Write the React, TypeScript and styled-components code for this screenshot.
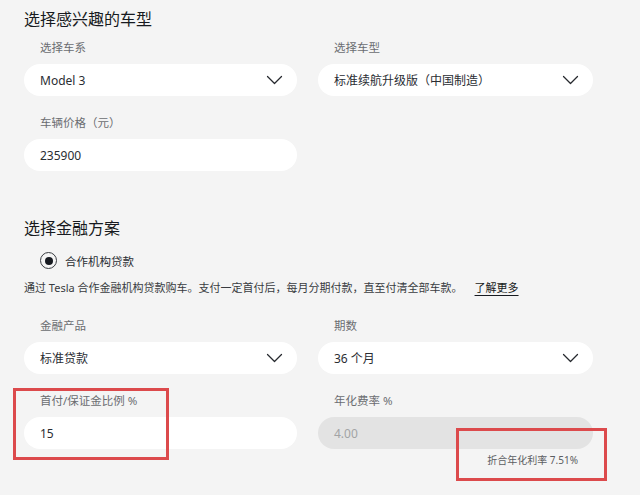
import styled, { createGlobalStyle } from 'styled-components'

const GlobalStyle = createGlobalStyle`
    html, body {
        margin: 0;
        padding: 0;
        background: #f4f4f4;
    }
    body {
        font-family: "Noto Sans", "Noto Sans CJK SC", sans-serif;
        color: #171a20;
    }
`

const Page = styled.div`
    position: relative;
    width: 640px;
    height: 495px;
    overflow: hidden;
    padding: 8px 0 0 24px;
    box-sizing: border-box;
`

const Title = styled.h2<{ $top?: number }>`
    margin: ${p => p.$top ?? 0}px 0 0;
    font-size: 16px;
    line-height: 22px;
    font-weight: 400;
    color: #171a20;
`

const Grid = styled.div<{ $top: number }>`
    display: grid;
    grid-template-columns: 273px 275px;
    column-gap: 21px;
    row-gap: 20px;
    margin-top: ${p => p.$top}px;
`

const Field = styled.div`
    display: flex;
    flex-direction: column;
`

const Label = styled.label`
    padding-left: 16px;
    font-size: 11.5px;
    line-height: 14px;
    color: #6b6d71;
    margin-bottom: 9px;
`

const Box = styled.div<{ $disabled?: boolean }>`
    display: flex;
    align-items: center;
    justify-content: space-between;
    height: 32px;
    border-radius: 16px;
    padding: 0 14px 0 16px;
    background: ${p => (p.$disabled ? '#e3e3e3' : '#ffffff')};
    color: ${p => (p.$disabled ? '#a2a3a5' : '#2a2d33')};
    font-size: 12px;
`

const Note = styled.div`
    grid-column: 2;
    margin-top: -16px;
    padding-right: 15px;
    text-align: right;
    font-size: 10px;
    line-height: 14px;
    color: #5c5e62;
`

const RadioRow = styled.div`
    display: flex;
    align-items: center;
    gap: 8px;
    margin: 13px 0 0 16px;
    font-size: 11.5px;
    color: #2a2d33;
`

const RadioDot = styled.span`
    width: 15px;
    height: 15px;
    border: 1.5px solid #393c41;
    border-radius: 50%;
    display: flex;
    align-items: center;
    justify-content: center;
    &::after {
        content: '';
        width: 8px;
        height: 8px;
        border-radius: 50%;
        background: #171a20;
    }
`

const Desc = styled.p`
    margin: 10px 0 0;
    font-size: 11px;
    line-height: 18px;
    color: #393c41;
    a {
        color: #171a20;
        text-decoration: underline;
        text-underline-offset: 3px;
        margin-left: 12px;
    }
`

const Mark = styled.div<{ $x: number; $y: number; $w: number; $h: number }>`
    position: absolute;
    left: ${p => p.$x}px;
    top: ${p => p.$y}px;
    width: ${p => p.$w}px;
    height: ${p => p.$h}px;
    border: 3px solid #dc4a4c;
    box-sizing: border-box;
    pointer-events: none;
`

const Chevron = () => (
    <svg width="17" height="10" viewBox="0 0 17 10" fill="none">
        <path d="M1.5 1.5 L8.5 8.5 L15.5 1.5" stroke="#26292e" strokeWidth="1.25" strokeLinecap="round" strokeLinejoin="round" />
    </svg>
)

const Select = ({ value }: { value: string }) => (
    <Box>
        <span>{value}</span>
        <Chevron />
    </Box>
)

export default function App() {
    return (
        <Page>
            <GlobalStyle />
            <Title>选择感兴趣的车型</Title>
            <Grid $top={11}>
                <Field>
                    <Label>选择车系</Label>
                    <Select value="Model 3" />
                </Field>
                <Field>
                    <Label>选择车型</Label>
                    <Select value="标准续航升级版（中国制造）" />
                </Field>
                <Field>
                    <Label>车辆价格（元）</Label>
                    <Box>235900</Box>
                </Field>
            </Grid>

            <Title $top={46}>选择金融方案</Title>
            <RadioRow>
                <RadioDot />
                合作机构贷款
            </RadioRow>
            <Desc>
                通过 Tesla 合作金融机构贷款购车。支付一定首付后，每月分期付款，直至付清全部车款。<a>了解更多</a>
            </Desc>
            <Grid $top={22}>
                <Field>
                    <Label>金融产品</Label>
                    <Select value="标准贷款" />
                </Field>
                <Field>
                    <Label>期数</Label>
                    <Select value="36 个月" />
                </Field>
                <Field>
                    <Label>首付/保证金比例 %</Label>
                    <Box>15</Box>
                </Field>
                <Field>
                    <Label>年化费率 %</Label>
                    <Box $disabled>4.00</Box>
                </Field>
                <Note>折合年化利率 7.51%</Note>
            </Grid>

            <Mark $x={13} $y={388} $w={156} $h={72} />
            <Mark $x={456} $y={428} $w={151} $h={53} />
        </Page>
    )
}
